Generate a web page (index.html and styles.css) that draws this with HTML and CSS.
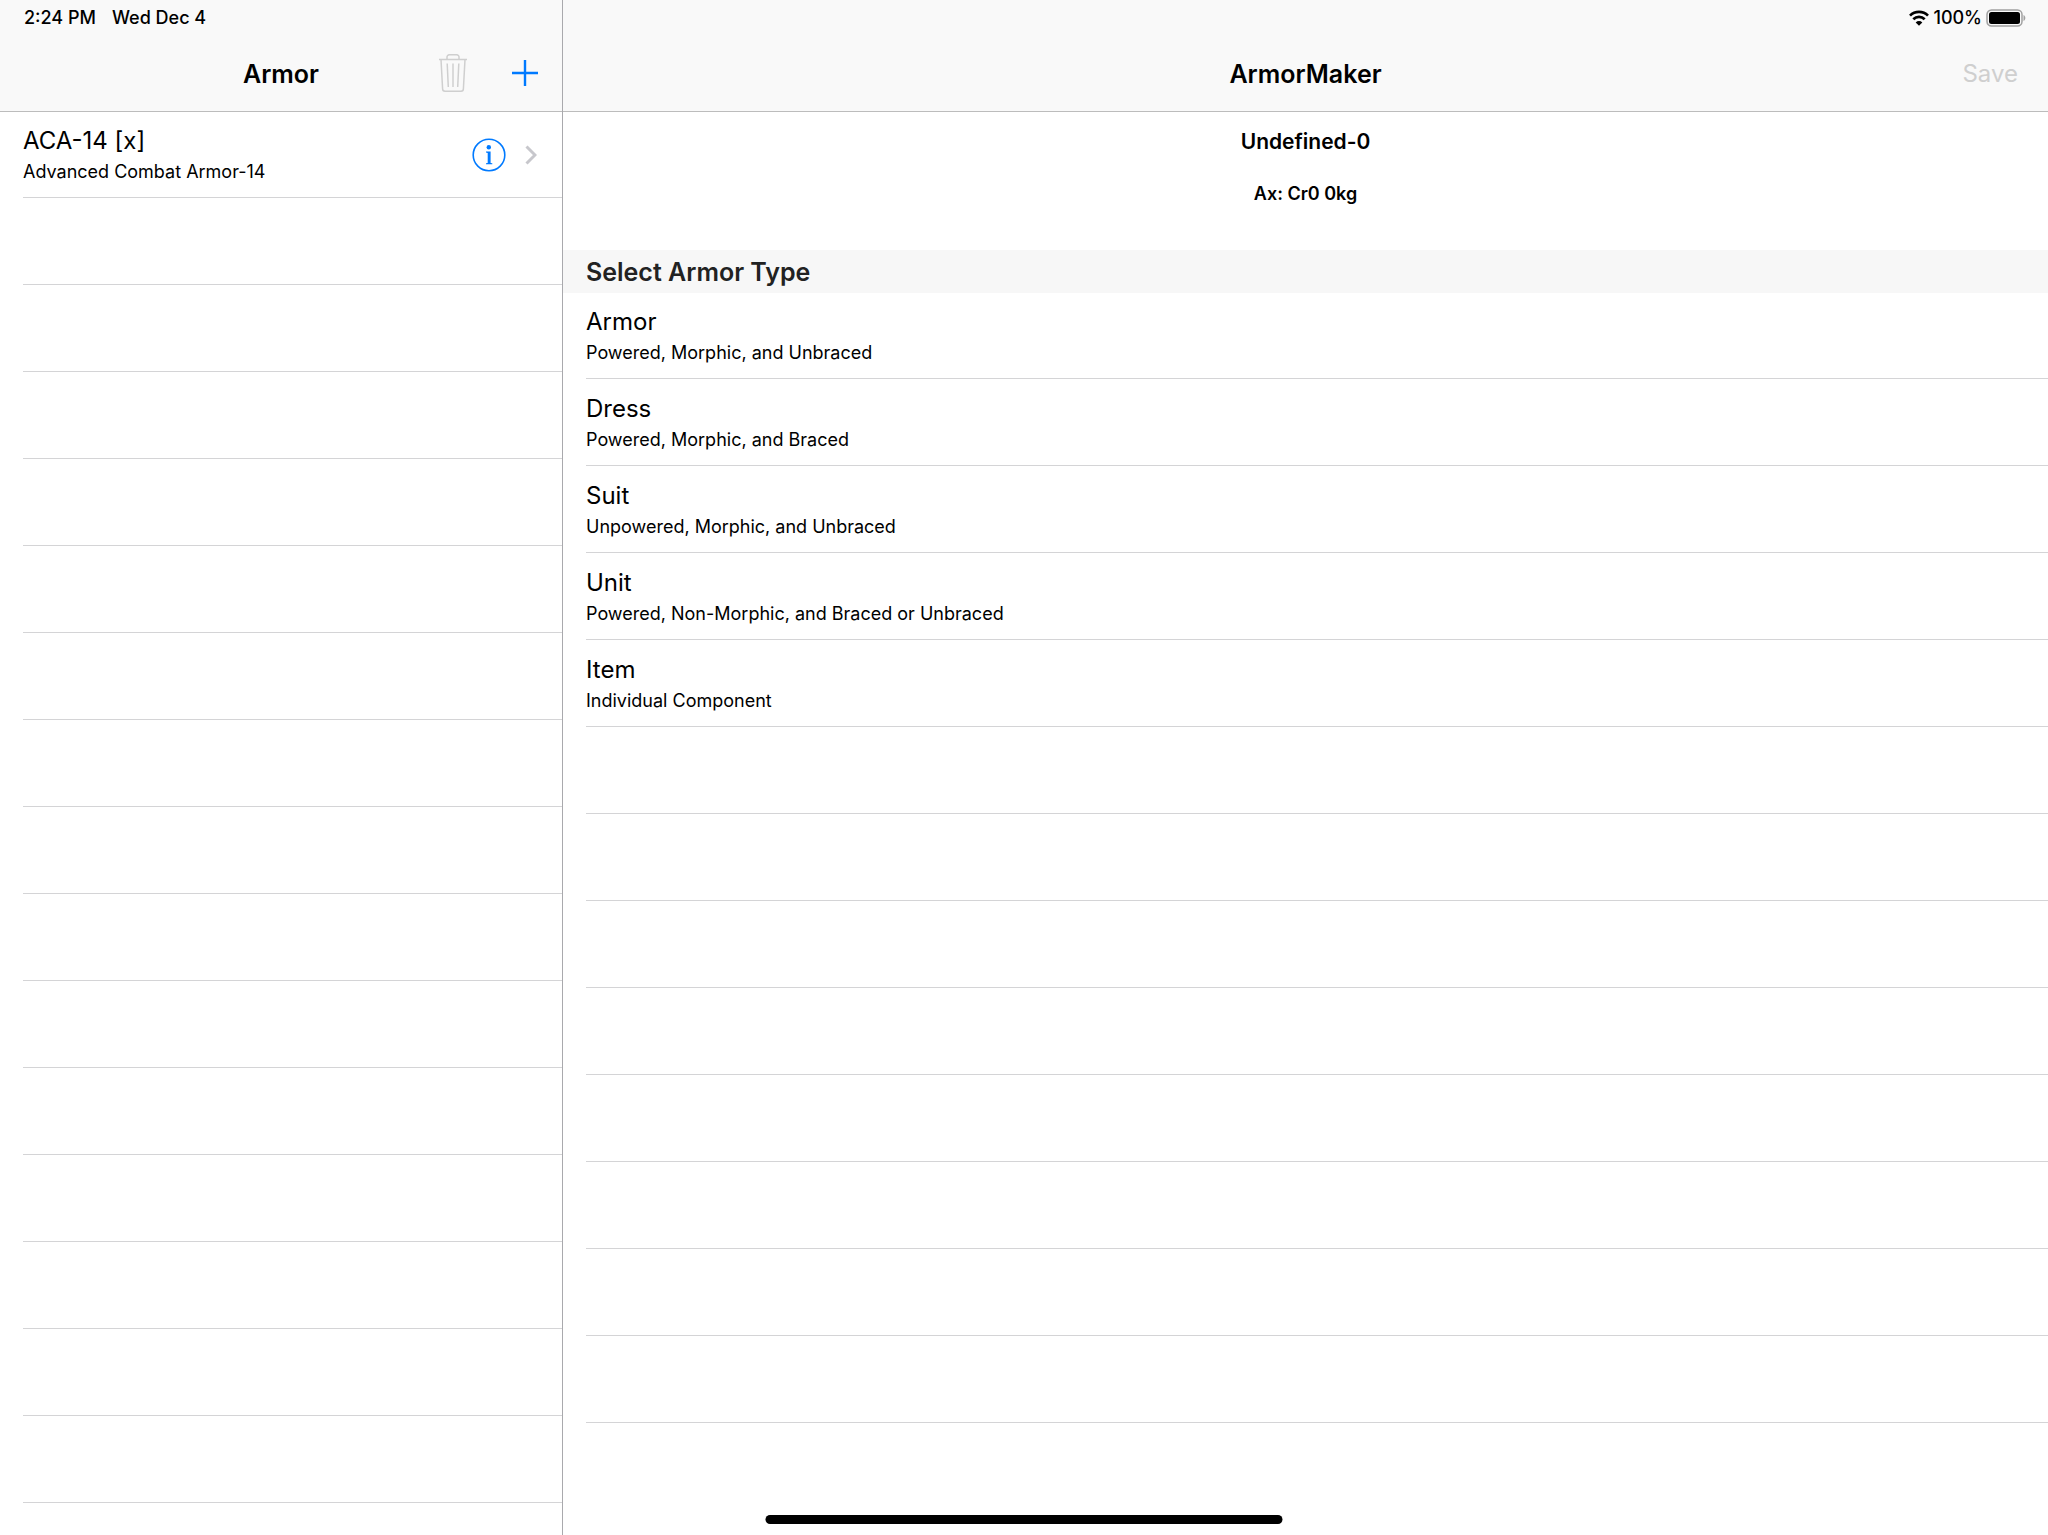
FILE: index.html
```html
<!DOCTYPE html>
<html lang="en">
<head>
<meta charset="utf-8">
<meta name="viewport" content="width=device-width, initial-scale=1">
<title>ArmorMaker</title>
<link rel="stylesheet" href="styles.css">
</head>
<body>
<div class="split">
  <aside class="pane master">
    <header class="bar">
      <div class="status"><span>2:24 PM</span><span>Wed Dec 4</span></div>
      <div class="nav">
        <h1 class="nav-title">Armor</h1>
        <div class="nav-actions">
          <button class="icon-button" type="button" aria-label="Delete" disabled>
            <svg width="28" height="38" viewBox="0 0 28 38" fill="none" stroke="#cfcfcf" stroke-width="1.5">
              <path d="M0 5.5h28M8 5.5V3a2.2 2.2 0 0 1 2.200-2.200h7.600A2.200 2.200 0 0 1 20 3v2.500M2 5.500l1.600 29.200A2.500 2.500 0 0 0 6 37.200h16a2.500 2.500 0 0 0 2.400-2.500L26 5.500M8.200 9.500l1.100 23.500M14 9.500V33M19.800 9.500l-1.100 23.500"/>
            </svg>
          </button>
          <button class="icon-button" type="button" aria-label="Add">
            <svg width="26" height="26" viewBox="0 0 26 26" fill="none" stroke="#007aff" stroke-width="2.4"><path d="M13 0v26M0 13h26"/></svg>
          </button>
        </div>
      </div>
    </header>
    <ul class="list">
      <li class="row row-detail">
        <div class="row-text">
          <span class="row-title">ACA-14 [x]</span>
          <span class="row-subtitle">Advanced Combat Armor-14</span>
        </div>
        <button class="icon-button" type="button" aria-label="More info">
          <svg width="34" height="34" viewBox="0 0 34 34">
            <circle cx="17" cy="17" r="15.800" fill="none" stroke="#007aff" stroke-width="1.600"/>
            <circle cx="16.800" cy="9.300" r="2.200" fill="#007aff"/>
            <path fill="#007aff" d="M14 13.600h4.600v11.400l1.700.3v1h-6.300v-1l1.700-.3V14.900l-1.700-.3z"/>
          </svg>
        </button>
        <svg class="chevron" width="12" height="20" viewBox="0 0 12 20" fill="none" stroke="#c7c7cc" stroke-width="3"><path d="M1.500 1.500L10 10l-8.500 8.500"/></svg>
      </li>
      <li class="row"></li><li class="row"></li><li class="row"></li><li class="row"></li><li class="row"></li>
      <li class="row"></li><li class="row"></li><li class="row"></li><li class="row"></li><li class="row"></li>
      <li class="row"></li><li class="row"></li><li class="row"></li><li class="row"></li><li class="row"></li>
    </ul>
  </aside>

  <main class="pane detail">
    <header class="bar">
      <div class="status status-end">
        <svg width="20" height="16" viewBox="0 0 20 16" aria-label="Wi-Fi">
          <g fill="none" stroke="#000" stroke-width="2.700"><path d="M1 5.600a12.800 12.800 0 0 1 18 0M4.300 9.200a8.200 8.200 0 0 1 11.400 0"/></g>
          <path d="M10 15.800L6.700 12.400a4.700 4.700 0 0 1 6.600 0z"/>
        </svg>
        <span>100%</span>
        <svg width="40" height="18" viewBox="0 0 40 18" aria-label="Battery full">
          <rect x="1" y="1" width="35" height="16" rx="4.500" fill="none" stroke="#a0a0a0" stroke-width="1.500"/>
          <rect x="3" y="3" width="31" height="12" rx="2.500"/>
          <path fill="#a0a0a0" d="M37.500 6c2.400.8 2.400 5.200 0 6z"/>
        </svg>
      </div>
      <div class="nav">
        <h1 class="nav-title">ArmorMaker</h1>
        <div class="nav-actions"><button class="text-button" type="button" disabled>Save</button></div>
      </div>
    </header>
    <section class="summary">
      <p class="summary-name">Undefined-0</p>
      <p class="summary-stats">Ax: Cr0 0kg</p>
    </section>
    <h2 class="section-title">Select Armor Type</h2>
    <ul class="list">
      <li class="row"><div class="row-text"><span class="row-title">Armor</span><span class="row-subtitle">Powered, Morphic, and Unbraced</span></div></li>
      <li class="row"><div class="row-text"><span class="row-title">Dress</span><span class="row-subtitle">Powered, Morphic, and Braced</span></div></li>
      <li class="row"><div class="row-text"><span class="row-title">Suit</span><span class="row-subtitle">Unpowered, Morphic, and Unbraced</span></div></li>
      <li class="row"><div class="row-text"><span class="row-title">Unit</span><span class="row-subtitle">Powered, Non-Morphic, and Braced or Unbraced</span></div></li>
      <li class="row"><div class="row-text"><span class="row-title">Item</span><span class="row-subtitle">Individual Component</span></div></li>
      <li class="row"></li><li class="row"></li><li class="row"></li><li class="row"></li>
      <li class="row"></li><li class="row"></li><li class="row"></li><li class="row"></li>
    </ul>
  </main>
</div>
<div class="home-indicator"></div>
</body>
</html>
```
FILE: styles.css
```css
* { box-sizing: border-box; }

body {
  margin: 0;
  background: #fff;
  color: #000;
  font-family: Inter, "Liberation Sans", sans-serif;
}

h1, h2, p, ul { margin: 0; padding: 0; }

button {
  padding: 0;
  border: 0;
  background: none;
  font: inherit;
}

svg { display: block; }

.split {
  display: grid;
  grid-template-columns: 563px minmax(0, 1fr);
  min-height: 100vh;
}

.master { border-right: 1px solid #a9a9ad; }

.bar {
  height: 112px;
  background: #f9f9f9;
  border-bottom: 1px solid #bcbcbc;
}

.status {
  display: flex;
  align-items: center;
  gap: 16px;
  height: 36px;
  padding: 0 24px;
  font-size: 18px;
  font-weight: 500;
  line-height: 24px;
}

.status-end {
  justify-content: flex-end;
  gap: 4px;
  padding-right: 22px;
}

.nav {
  display: grid;
  grid-template-columns: 1fr auto 1fr;
  align-items: center;
  height: 75px;
  padding: 0 24px;
}

.nav-title {
  grid-column: 2;
  font-size: 25px;
  font-weight: 600;
  line-height: 32px;
}

.nav-actions {
  display: flex;
  justify-content: flex-end;
  align-items: center;
  gap: 45px;
}

.master .nav-actions { padding-bottom: 2px; }
.detail .nav { padding-right: 30px; padding-left: 30px; }

.text-button {
  color: #cfcfcf;
  font-size: 24px;
  line-height: 32px;
}

.list { list-style: none; padding-left: 23px; }

.row {
  display: flex;
  align-items: center;
  min-height: 87px;
  border-bottom: 1px solid #d4d4d6;
}

.row:first-child { min-height: 86px; }

.row-detail { gap: 19px; padding-right: 25px; }

.row-text {
  display: flex;
  flex: 1;
  flex-direction: column;
  gap: 3px;
}

.row-title { font-size: 24px; line-height: 32px; }
.row-subtitle { font-size: 18px; line-height: 24px; }

.summary {
  height: 138px;
  padding-top: 14px;
  text-align: center;
  font-weight: 600;
}

.summary-name { font-size: 21px; line-height: 32px; }
.summary-stats { margin-top: 24px; font-size: 18px; line-height: 24px; }

.section-title {
  padding: 6px 23px 5px;
  background: #f7f7f7;
  color: #222;
  font-size: 25px;
  font-weight: 600;
  line-height: 32px;
}

.home-indicator {
  position: fixed;
  bottom: 11px;
  left: 50%;
  width: 517px;
  max-width: 80%;
  height: 9px;
  border-radius: 5px;
  background: #000;
  transform: translateX(-50%);
}
```
